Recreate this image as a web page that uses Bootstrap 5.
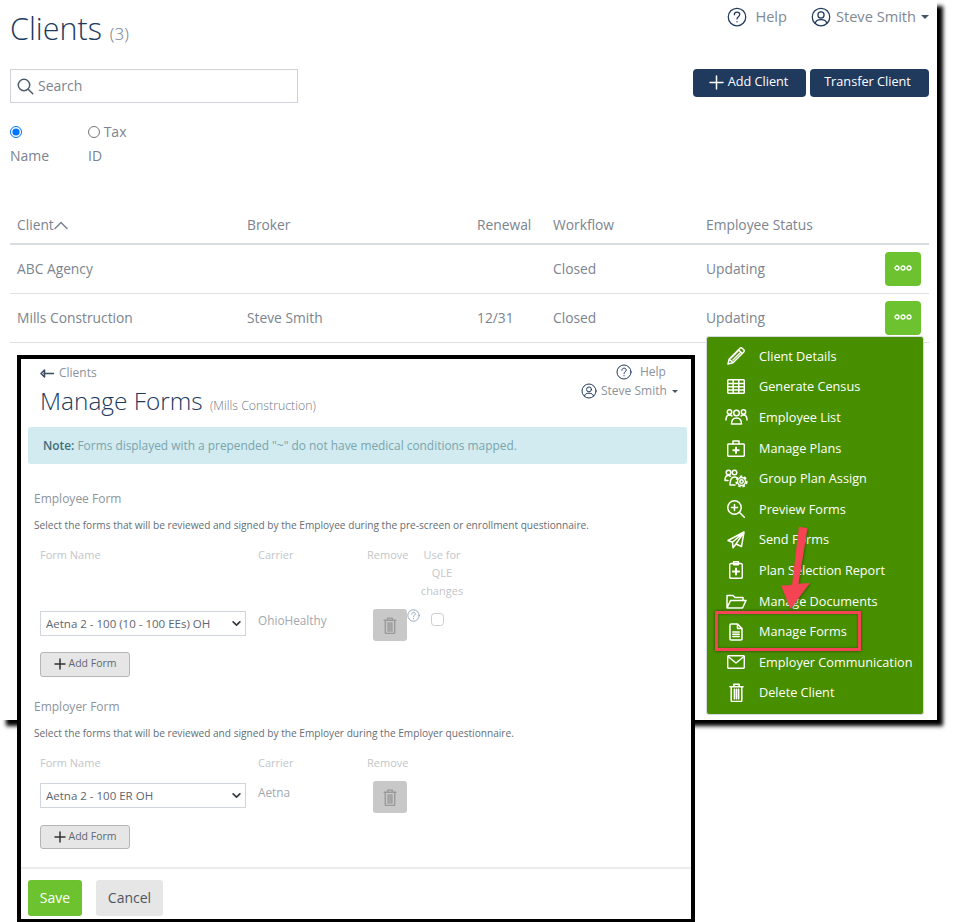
<!DOCTYPE html>
<html lang="en">
<head>
<meta charset="utf-8">
<title>Clients</title>
<link href="https://cdn.jsdelivr.net/npm/bootstrap@5.3.0/dist/css/bootstrap.min.css" rel="stylesheet">
<style>
html,body{margin:0;height:922px;overflow:hidden;background:#fff}
body{font-family:"Open Sans","Liberation Sans",sans-serif;color:#7b8490;font-size:13.8px;position:relative}
.ico{fill:none;stroke:currentColor;stroke-width:1.5;stroke-linecap:round;stroke-linejoin:round;flex:none;display:block}
.main-win{width:937px;height:720px;background:#fff;box-shadow:6px 6px 4px #000;padding:0 8px 0 10px}
.top-row{height:69px}
.page-title{font-size:30.5px;font-weight:300;color:#203a5e;line-height:40px;margin:8px 0 0}
.page-title small,.sub-title small{color:#6f7a88;font-weight:300}
.page-title small{font-size:17px}
.help-row{height:24px;margin-top:5px;font-size:14.6px;color:#7f8894}
.ic-navy{color:#203a5e}
.gap-a{margin-left:8px}
.gap-b{margin-left:24px}
.gap-c{margin-left:5px;margin-right:5px}
.caret-dn{width:0;height:0;border:4px solid transparent;border-top-color:#4a5563;border-bottom:0;display:inline-block}
.search-box{width:288px;height:34px;border:1px solid #cfd2d8;padding-left:6px;gap:4px}
.search-box input{border:0;outline:0;padding:0;margin-bottom:2px;width:230px;font-size:14px;color:#7b8490}
.search-box input::placeholder{color:#7b8490;opacity:1}
.btn-navy{background:#203a5e;color:#fff;font-size:12.7px;height:28px;padding:0 2px 2px 0;border:0;border-radius:4px;display:flex;align-items:center;justify-content:center;gap:4px}
.btn-navy:hover{background:#203a5e;color:#fff}
.w-add{width:113px}.w-tr{width:119px;padding-right:4px}
.radio-row{margin-top:17px;height:48px;line-height:24px;font-size:14px}
.radio-lab{display:block;width:45px;margin-right:33px}
.radio-lab input{margin:0;width:12px;height:12px;vertical-align:-1px}
.client-tbl{margin:39px 0 0;width:919px;table-layout:fixed;font-size:13.8px;--bs-table-color:#7b8490;--bs-table-bg:transparent}
.client-tbl th{font-weight:400;padding:1px 0 0 7px;height:37px;border-bottom:2px solid #d9dce2;vertical-align:middle}
.client-tbl td{padding:2px 0 0 7px;height:49px;border-bottom:1px solid #dfe1e5;vertical-align:middle}
.client-tbl td.act-cell{padding:0}
.status-txt{padding:2px 0 0 7px;width:0;white-space:nowrap}
.btn-dots{width:36px;height:34px;background:#6cc32f;border:0;border-radius:4px;padding:0 0 2px;display:flex;align-items:center;justify-content:center;margin-left:179px}
.menu-green{background:#488f00;border:1px solid #d6d9df;border-radius:3px;left:706px;top:336px;width:218px;padding:4px 0 6px;box-shadow:none}
.menu-green .dropdown-item{color:#fff;height:30.6px;padding:0 0 0 17px;display:flex;align-items:center;font-size:12.7px;background:none}
.menu-ic{width:24px;display:flex;justify-content:center;margin-right:11px;color:#fff}
.red-box{position:absolute;z-index:1001;left:715px;top:611px;width:146px;height:40px;border:3px solid #f44352;box-shadow:0 0 3px rgba(0,0,0,.55),inset 0 0 3px rgba(0,0,0,.4)}
.red-arrow{position:absolute;z-index:1002;left:770px;top:520px;pointer-events:none;filter:drop-shadow(1px 1px 1px rgba(0,0,0,.3))}
.forms-win{position:absolute;left:17px;top:355px;width:678px;height:567px;background:#fff;border:4px solid #000;border-bottom-width:3px;display:flex;flex-direction:column}
.win-head{height:68px;padding-left:19px}
.back-link{font-size:12px;line-height:18px;margin-top:5px;color:#8b929c;gap:5px}
.back-ic{color:#3a4a5e}
.sub-title{font-size:24.4px;font-weight:300;color:#203a5e;line-height:30px;margin:4px 0 0}
.sub-title small{font-size:12.3px;margin-left:1px}
.win-user{font-size:12px;color:#8b929c;width:96px;margin-right:14px;margin-top:2px}
.win-line{height:22px}
.win-help{margin-left:35px;gap:8px}
.win-steve{margin-top:-3px;gap:4px;white-space:nowrap}
.caret-sm{border-width:3px;border-bottom:0;margin-left:1px}
.note-box{margin:0 4px 0 7px;height:37px;padding:0 15px;background:#d1ebf0;border:0;border-radius:3px;font-size:11.9px;color:#7aa5ae;line-height:37px}
.note-box b{font-weight:600;color:#3f6d78}
.form-sec{padding-left:13px}
.sec-one{margin-top:26px}
.sec-two{margin-top:21px}
.sec-head{font-size:12px;line-height:18px;color:#8e949c}
.sec-desc{font-size:10.15px;line-height:18px;color:#666d75;margin-top:8px;white-space:nowrap}
.form-grid{display:grid;grid-template-columns:218px 109px 53px 44px;margin-left:6px;margin-top:12px}
.hd{font-size:11px;line-height:18px;color:#c2c5ca}
.hd-c{text-align:center}
.form-grid.grid-row{margin-top:9px}
.sel-form{width:206px;height:25px;border:1px solid #d0d4dc;border-radius:0;font-size:11.5px;padding:0 20px 0 5px;color:#5c6570;margin-top:2px;background-position:right 4px center;background-size:9px 7px;background-image:url("data:image/svg+xml,%3csvg xmlns='http://www.w3.org/2000/svg' viewBox='0 0 16 12'%3e%3cpath fill='none' stroke='%23343a40' stroke-linecap='round' stroke-linejoin='round' stroke-width='3' d='M2 3l6 6 6-6'/%3e%3c/svg%3e")}
.carrier{font-size:11.8px;line-height:18px;color:#a3a8ae;margin-top:2px}
.trash-btn{width:34px;height:32px;background:#c8c8c8;border-radius:3px;margin-left:6px;color:#9a9a9a;display:flex;align-items:center;justify-content:center;border:0;padding:0;flex:none}
.qle-help{color:#7f99b3}
.qle-box{width:13px;height:13px;border:1px solid #c9ccd1;margin:4px 0 0 11px;border-radius:0;padding:0}
.add-btn{width:90px;height:25px;background:#e6e6e6;border:1px solid #b5b5b5;border-radius:3px;font-size:10.5px;color:#5f6670;padding:0 0 1px;display:flex;align-items:center;justify-content:center;gap:3px;margin-left:6px;margin-top:11px}
.add-btn.a2{margin-top:12px;height:24px}
.plus-dk{color:#333}
.win-foot{margin-top:18px;border-top:2px solid #ececec;padding:11px 0 0 7px;gap:14px}
.btn-save{width:54px;height:36px;background:#6cc32f;color:#fff;border:0;border-radius:3px;padding:0 0 2px;font-size:14px}
.btn-cancel{width:67px;height:36px;background:#e6e6e6;color:#4c5560;border:0;border-radius:3px;padding:0 0 2px;font-size:14px}
</style>
</head>
<body>
<svg width="0" height="0" class="position-absolute">
<defs>
<symbol id="i-q" viewBox="0 0 24 24"><circle cx="12" cy="12" r="10.5"/><path d="M8.8 9.400c0-2 1.500-3.200 3.300-3.200s3.200 1.100 3.200 2.800c0 2.600-3.300 2.600-3.300 5.300"/><path d="M12 17.400v.4"/></symbol>
<symbol id="i-u" viewBox="0 0 24 24"><circle cx="12" cy="12" r="10.5"/><circle cx="12" cy="9.600" r="3.700"/><path d="M5.200 19.500c.5-3 3-4.200 6.800-4.200s6.300 1.200 6.800 4.200"/></symbol>
<symbol id="i-trash" viewBox="0 0 14 18"><path d="M.8 3.500h12.400M4.500 3.500V1.200h5v2.300M2 3.500v13a1 1 0 0 0 1 1h8a1 1 0 0 0 1-1v-13M5 6v9M7 6v9M9 6v9"/></symbol>
</defs>
</svg>

<div class="main-win">
  <div class="top-row d-flex justify-content-between">
    <h1 class="page-title">Clients <small>(3)</small></h1>
    <div class="help-row d-flex align-items-center">
      <svg class="ico ic-navy" width="20" height="20"><use href="#i-q"/></svg>
      <span class="gap-a">Help</span>
      <svg class="ico ic-navy gap-b" width="20" height="20"><use href="#i-u"/></svg>
      <span class="gap-c">Steve Smith</span>
      <span class="caret-dn"></span>
    </div>
  </div>
  <div class="d-flex justify-content-between align-items-start">
    <div class="search-box d-flex align-items-center">
      <svg class="ico" width="17" height="17" viewBox="0 0 17 17" stroke-width="1.200" color="#4d5c6e"><circle cx="7" cy="7" r="5.700"/><path d="M11.200 11.200l4.600 4.600"/></svg>
      <input type="text" placeholder="Search" aria-label="Search">
    </div>
    <div class="d-flex gap-1">
      <button class="btn btn-navy w-add"><svg class="ico" width="15" height="15" viewBox="0 0 15 15"><path d="M7.500 1v13M1 7.500h13"/></svg>Add Client</button>
      <button class="btn btn-navy w-tr">Transfer Client</button>
    </div>
  </div>
  <div class="radio-row d-flex">
    <label class="radio-lab"><input type="radio" name="by" checked> Name</label>
    <label class="radio-lab"><input type="radio" name="by"> Tax ID</label>
  </div>
  <table class="table client-tbl">
    <colgroup><col style="width:230px"><col style="width:230px"><col style="width:76px"><col style="width:153px"><col style="width:230px"></colgroup>
    <thead><tr>
      <th><span class="d-inline-flex align-items-center">Client<svg class="ico" width="14" height="9" viewBox="0 0 14 9" stroke-width="1"><path d="M1 7.500L7 1.500l6 6"/></svg></span></th>
      <th>Broker</th><th>Renewal</th><th>Workflow</th><th>Employee Status</th>
    </tr></thead>
    <tbody>
      <tr><td>ABC Agency</td><td></td><td></td><td>Closed</td>
        <td class="act-cell"><div class="d-flex align-items-center"><span class="status-txt">Updating</span><button class="btn-dots" aria-label="Actions"><svg width="18" height="6" viewBox="0 0 18 6" fill="none" stroke="#fff" stroke-width="1.300"><circle cx="3" cy="3" r="2"/><circle cx="9" cy="3" r="2"/><circle cx="15" cy="3" r="2"/></svg></button></div></td></tr>
      <tr><td>Mills Construction</td><td>Steve Smith</td><td>12/31</td><td>Closed</td>
        <td class="act-cell"><div class="d-flex align-items-center"><span class="status-txt">Updating</span><button class="btn-dots" aria-label="Actions"><svg width="18" height="6" viewBox="0 0 18 6" fill="none" stroke="#fff" stroke-width="1.300"><circle cx="3" cy="3" r="2"/><circle cx="9" cy="3" r="2"/><circle cx="15" cy="3" r="2"/></svg></button></div></td></tr>
    </tbody>
  </table>
</div>

<ul class="dropdown-menu show menu-green">
  <li><a class="dropdown-item" href="#"><span class="menu-ic"><svg class="ico" width="20" height="20" viewBox="0 0 20 20" stroke-width="1.300"><path d="M2 18l1.200-5L14 2.200a1.500 1.500 0 0 1 2.100 0l1.700 1.700a1.500 1.500 0 0 1 0 2.100L7 16.800zM3.200 13L7 16.800M12.500 3.700l3.800 3.800M5 12l7.500-7.500M7 14l7.500-7.500"/></svg></span>Client Details</a></li>
  <li><a class="dropdown-item" href="#"><span class="menu-ic"><svg class="ico" width="18" height="15" viewBox="0 0 18 15" stroke-width="1.300"><rect x=".7" y=".7" width="16.600" height="13.600" rx="1"/><path d="M.7 4.500h16.600M.7 7.800h16.600M.7 11.100h16.600M6.200 .7v13.600M11.800 .7v13.600"/></svg></span>Generate Census</a></li>
  <li><a class="dropdown-item" href="#"><span class="menu-ic"><svg class="ico" width="23" height="16" viewBox="0 0 23 16" stroke-width="1.200"><circle cx="11.500" cy="4" r="2.800"/><path d="M6.500 15c0-3.800 2-6 5-6s5 2.200 5 6z"/><circle cx="4.500" cy="3" r="2.200"/><circle cx="18.500" cy="3" r="2.200"/><path d="M1 11c0-3 1.300-5 3.500-5 1 0 1.800.3 2.400.9M22 11c0-3-1.300-5-3.500-5-1 0-1.800.3-2.400.9"/></svg></span>Employee List</a></li>
  <li><a class="dropdown-item" href="#"><span class="menu-ic"><svg class="ico" width="18" height="17" viewBox="0 0 18 17" stroke-width="1.300"><rect x=".7" y="4" width="16.600" height="12.300" rx="1"/><path d="M6 4V1h6v3"/><path d="M9 7.500v5.500M6.300 10.200h5.400" stroke-width="2"/></svg></span>Manage Plans</a></li>
  <li><a class="dropdown-item" href="#"><span class="menu-ic"><svg class="ico" width="24" height="19" viewBox="0 0 24 19" stroke-width="1.100"><circle cx="4.500" cy="3.500" r="2.300"/><circle cx="10.500" cy="3.500" r="2.300"/><path d="M1 11c0-3 1.300-4.500 3.500-4.500 1 0 1.500.2 2 .7M1 11.500h3M7 16h4M6 16c0-4.500 1.500-8 4.500-8 1 0 1.800.2 2.500.8"/><circle cx="17.500" cy="12.500" r="1.700"/><circle cx="17.500" cy="12.500" r="4"/><circle cx="17.500" cy="12.500" r="5.200" stroke-dasharray="2.400 2.050" stroke-width="1.800" stroke-linecap="butt"/></svg></span>Group Plan Assign</a></li>
  <li><a class="dropdown-item" href="#"><span class="menu-ic"><svg class="ico" width="18" height="18" viewBox="0 0 18 18" stroke-width="1.300"><circle cx="7.500" cy="7.500" r="6.700"/><path d="M12.300 12.300l5 5M7.500 4.500v6M4.500 7.500h6"/></svg></span>Preview Forms</a></li>
  <li><a class="dropdown-item" href="#"><span class="menu-ic"><svg class="ico" width="18" height="18" viewBox="0 0 18 18" stroke-width="1.200"><path d="M17 1L1 9.500l4.500 1.800zM17 1l-2.500 14.500-5.500-2.500-3 3.800-.5-5.500zM17 1L9 13"/></svg></span>Send Forms</a></li>
  <li><a class="dropdown-item" href="#"><span class="menu-ic"><svg class="ico" width="14" height="18" viewBox="0 0 14 18" stroke-width="1.300"><rect x=".7" y="2.500" width="12.600" height="14.800" rx="1.500"/><rect x="4.500" y=".7" width="5" height="3" rx=".5"/><path d="M7 7.500v6M4 10.500h6" stroke-width="2"/></svg></span>Plan Selection Report</a></li>
  <li><a class="dropdown-item" href="#"><span class="menu-ic"><svg class="ico" width="21" height="15" viewBox="0 0 21 15" stroke-width="1.100"><path d="M1 14V1.500h6l2 2h8v3M1 14l3.500-7.500H20L16.500 14z"/></svg></span>Manage Documents</a></li>
  <li><a class="dropdown-item" href="#"><span class="menu-ic"><svg class="ico" width="14" height="18" viewBox="0 0 14 18" stroke-width="1.300"><path d="M1 2a1 1 0 0 1 1-1h6.500L13 5.500V16a1 1 0 0 1-1 1H2a1 1 0 0 1-1-1zM8.500 1v4.500H13M3.800 9h6.400M3.800 11.300h6.400M3.800 13.600h6.400"/></svg></span>Manage Forms</a></li>
  <li><a class="dropdown-item" href="#"><span class="menu-ic"><svg class="ico" width="18" height="14" viewBox="0 0 18 14" stroke-width="1.300"><rect x=".7" y=".7" width="16.600" height="12.600" rx="1"/><path d="M1 1.500L9 8l8-6.500"/></svg></span>Employer Communication</a></li>
  <li><a class="dropdown-item" href="#"><span class="menu-ic"><svg class="ico" width="15" height="19" stroke-width="1.200"><use href="#i-trash"/></svg></span>Delete Client</a></li>
</ul>
<div class="red-box"></div>
<svg class="red-arrow" width="50" height="95" viewBox="770 520 50 95"><path d="M807.500 528.200l-8.600-1.400L792 585l-11 .5 9.500 23.500 19.500-26-11.500.8z" fill="#f44352"/></svg>

<div class="forms-win">
  <div class="win-head d-flex justify-content-between">
    <div>
      <div class="back-link d-flex align-items-center"><svg class="ico back-ic" width="14" height="9" viewBox="0 0 14 9" stroke-width=".9"><path d="M14 4.500H4M4.500 1L1 4.500 4.500 8z"/></svg>Clients</div>
      <h2 class="sub-title">Manage Forms <small>(Mills Construction)</small></h2>
    </div>
    <div class="win-user">
      <div class="win-line win-help d-flex align-items-center"><svg class="ico ic-navy" width="16" height="16"><use href="#i-q"/></svg><span>Help</span></div>
      <div class="win-line win-steve d-flex align-items-center"><svg class="ico ic-navy" width="16" height="16"><use href="#i-u"/></svg>Steve Smith<span class="caret-dn caret-sm"></span></div>
    </div>
  </div>
  <div class="alert alert-info note-box mb-0"><b>Note:</b> Forms displayed with a prepended "~" do not have medical conditions mapped.</div>

  <div class="form-sec sec-one">
    <div class="sec-head">Employee Form</div>
    <div class="sec-desc">Select the forms that will be reviewed and signed by the Employee during the pre-screen or enrollment questionnaire.</div>
    <div class="form-grid">
      <div class="hd">Form Name</div><div class="hd">Carrier</div><div class="hd">Remove</div><div class="hd hd-c">Use for QLE changes</div>
    </div>
    <div class="form-grid grid-row">
      <div><select class="form-select sel-form" aria-label="Form"><option>Aetna 2 - 100 (10 - 100 EEs) OH</option></select></div>
      <div class="carrier">OhioHealthy</div>
      <div class="d-flex"><button class="trash-btn" aria-label="Remove"><svg class="ico" width="14" height="17" stroke-width="1"><use href="#i-trash"/></svg></button><svg class="ico qle-help" width="13" height="13"><use href="#i-q"/></svg></div>
      <div><input class="form-check-input qle-box" type="checkbox" aria-label="Use for QLE changes"></div>
    </div>
    <button class="btn add-btn"><svg class="ico plus-dk" width="12" height="12" viewBox="0 0 12 12"><path d="M6 1v10M1 6h10"/></svg>Add Form</button>
  </div>

  <div class="form-sec sec-two">
    <div class="sec-head">Employer Form</div>
    <div class="sec-desc">Select the forms that will be reviewed and signed by the Employer during the Employer questionnaire.</div>
    <div class="form-grid">
      <div class="hd">Form Name</div><div class="hd">Carrier</div><div class="hd">Remove</div><div></div>
    </div>
    <div class="form-grid grid-row">
      <div><select class="form-select sel-form" aria-label="Form"><option>Aetna 2 - 100 ER OH</option></select></div>
      <div class="carrier">Aetna</div>
      <div class="d-flex"><button class="trash-btn" aria-label="Remove"><svg class="ico" width="14" height="17" stroke-width="1"><use href="#i-trash"/></svg></button></div>
      <div></div>
    </div>
    <button class="btn add-btn a2"><svg class="ico plus-dk" width="12" height="12" viewBox="0 0 12 12"><path d="M6 1v10M1 6h10"/></svg>Add Form</button>
  </div>

  <div class="win-foot d-flex">
    <button class="btn btn-save">Save</button>
    <button class="btn btn-cancel">Cancel</button>
  </div>
</div>
<script src="https://cdn.jsdelivr.net/npm/bootstrap@5.3.0/dist/js/bootstrap.bundle.min.js"></script>
</body>
</html>
